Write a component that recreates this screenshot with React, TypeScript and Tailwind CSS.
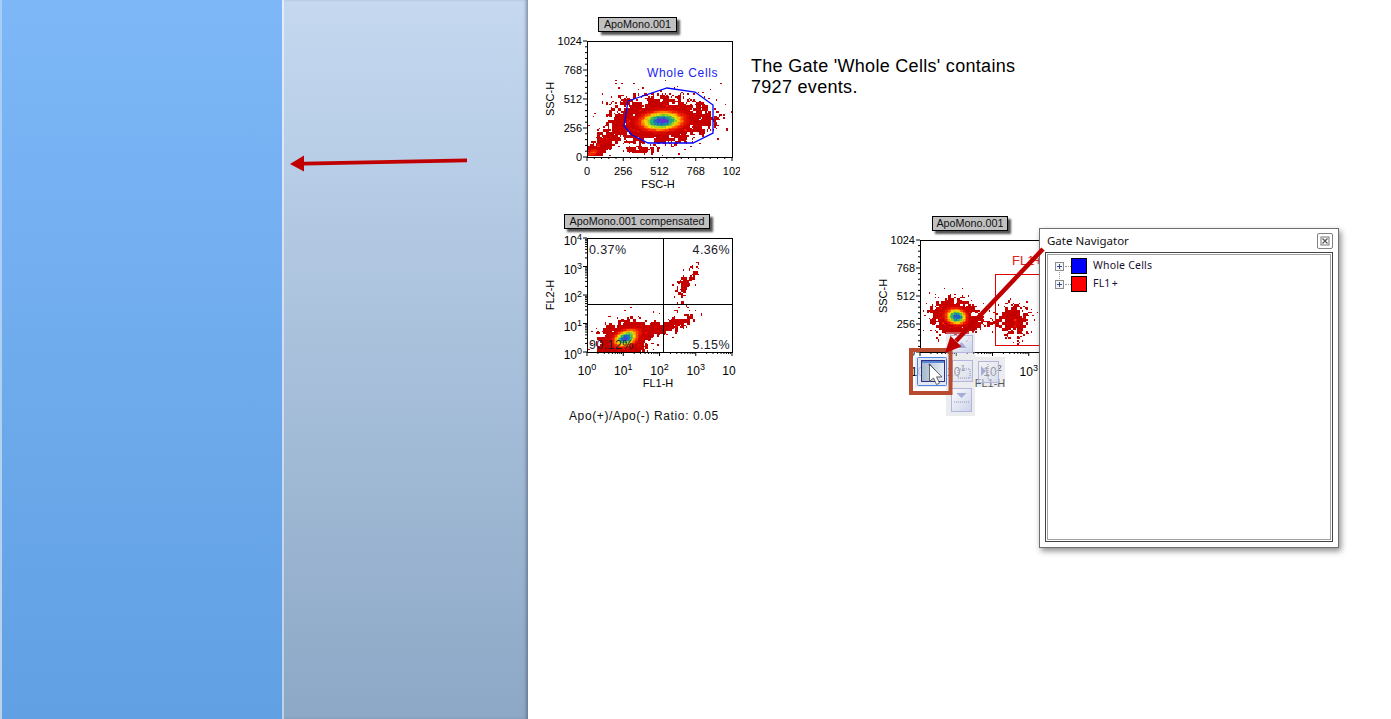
import React from 'react';

// Seeded random so the dots stay put between renders
const makeRandom = (seed: number) => () => {
  seed = (seed + 0x6d2b79f5) | 0;
  let t = Math.imul(seed ^ (seed >>> 15), 1 | seed);
  t = (t + Math.imul(t ^ (t >>> 7), 61 | t)) ^ t;
  return ((t ^ (t >>> 14)) >>> 0) / 4294967296;
};

interface Blob {
  cx: number;
  cy: number;
  sx: number;
  sy: number;
  rot?: number;
  a: number;
}

interface Box {
  x0: number;
  y0: number;
  x1: number;
  y1: number;
}

const RAMP: [number, number[]][] = [
  [0, [190, 0, 0]],
  [0.3, [205, 0, 0]],
  [0.42, [240, 30, 0]],
  [0.52, [255, 130, 0]],
  [0.62, [245, 225, 0]],
  [0.72, [120, 200, 50]],
  [0.82, [30, 165, 130]],
  [0.92, [30, 90, 210]],
  [1, [130, 30, 210]],
];

const rampColor = (v: number) => {
  const t = Math.min(1, Math.max(0, v));
  for (let i = 1; i < RAMP.length; i++) {
    if (t <= RAMP[i][0]) {
      const [p0, c0] = RAMP[i - 1];
      const [p1, c1] = RAMP[i];
      const k = (t - p0) / (p1 - p0);
      const c = c0.map((n, j) => Math.round(n + (c1[j] - n) * k));
      return `rgb(${c[0]},${c[1]},${c[2]})`;
    }
  }
  return 'rgb(130,30,210)';
};

const densityAt = (blobs: Blob[], x: number, y: number) => {
  let sum = 0;
  for (const b of blobs) {
    const r = ((b.rot ?? 0) * Math.PI) / 180;
    const dx = x - b.cx;
    const dy = y - b.cy;
    const u = (dx * Math.cos(r) + dy * Math.sin(r)) / b.sx;
    const w = (-dx * Math.sin(r) + dy * Math.cos(r)) / b.sy;
    sum += b.a * Math.exp(-0.5 * (u * u + w * w));
  }
  return sum;
};

function Density({ box, blobs, seed }: { box: Box; blobs: Blob[]; seed: number }) {
  const rnd = makeRandom(seed);
  const blotches = new Map<string, number>();
  const cells: React.ReactElement[] = [];
  const step = 1.5;
  for (let x = box.x0 + 1; x < box.x1 - 1; x += step) {
    for (let y = box.y0 + 1; y < box.y1 - 1; y += step) {
      const v = densityAt(blobs, x, y);
      // coarse noise makes the low density edge blotchy
      const key = `${Math.floor(x / 3)}:${Math.floor(y / 3)}`;
      if (!blotches.has(key)) blotches.set(key, 0.2 + 1.6 * rnd());
      const blotch = blotches.get(key) as number;
      const noisy = (v < 0.25 ? v * blotch : v) * (0.75 + 0.5 * rnd());
      if (noisy < 0.07 && rnd() > noisy / 0.5) continue;
      const shade = v < 0.25 ? noisy * 0.9 : v * (0.94 + 0.12 * rnd());
      cells.push(<rect key={`${x}-${y}`} x={x} y={y} width={step} height={step} fill={rampColor(shade)} />);
    }
  }
  return <g shapeRendering="crispEdges">{cells}</g>;
}

function LinearAxes({ box }: { box: Box }) {
  const w = box.x1 - box.x0;
  const h = box.y1 - box.y0;
  const ticks = [];
  for (let i = 0; i <= 20; i++) {
    const len = i % 5 === 0 ? 4 : 2;
    ticks.push(<line key={`x${i}`} x1={box.x0 + (w * i) / 20} x2={box.x0 + (w * i) / 20} y1={box.y1} y2={box.y1 + len} stroke="#000" />);
    ticks.push(<line key={`y${i}`} x1={box.x0 - len} x2={box.x0} y1={box.y1 - (h * i) / 20} y2={box.y1 - (h * i) / 20} stroke="#000" />);
  }
  return (
    <g>
      {ticks}
      {['0', '256', '512', '768', '1024'].map((t, i) => (
        <text key={t} x={box.x0 - 5} y={box.y1 - (h * i) / 4 + 4} textAnchor="end" fontSize="11">
          {t}
        </text>
      ))}
      {['0', '256', '512', '768', '102'].map((t, i) => (
        <text key={t} x={box.x0 + (w * i) / 4} y={box.y1 + 18} textAnchor="middle" fontSize="11">
          {t}
        </text>
      ))}
    </g>
  );
}

function LogAxes({ box, labelY }: { box: Box; labelY: number }) {
  const w = box.x1 - box.x0;
  const h = box.y1 - box.y0;
  const ticks = [];
  for (let d = 0; d < 4; d++) {
    for (let m = 1; m < 10; m++) {
      const f = (d + Math.log10(m)) / 4;
      const len = m === 1 ? 4 : 2;
      ticks.push(<line key={`x${d}${m}`} x1={box.x0 + w * f} x2={box.x0 + w * f} y1={box.y1} y2={box.y1 + len} stroke="#000" />);
      ticks.push(<line key={`y${d}${m}`} x1={box.x0 - len} x2={box.x0} y1={box.y1 - h * f} y2={box.y1 - h * f} stroke="#000" />);
    }
  }
  return (
    <g>
      {ticks}
      <line x1={box.x1} x2={box.x1} y1={box.y1} y2={box.y1 + 4} stroke="#000" />
      <line x1={box.x0 - 4} x2={box.x0} y1={box.y0} y2={box.y0} stroke="#000" />
      {[0, 1, 2, 3].map((d) => (
        <text key={d} x={box.x0 + (w * d) / 4} y={labelY} textAnchor="middle" fontSize="12">
          10<tspan dy="-5" fontSize="9">{d}</tspan>
        </text>
      ))}
      <text x={box.x1 - 3} y={labelY} textAnchor="middle" fontSize="12">10</text>
      {[0, 1, 2, 3, 4].map((d) => (
        <text key={d} x={box.x0 - 5} y={box.y1 - (h * d) / 4 + 7} textAnchor="end" fontSize="12">
          10
          <tspan dy="-5" fontSize="9">{d}</tspan>
        </text>
      ))}
    </g>
  );
}

const scatterBox: Box = { x0: 587, y0: 41, x1: 732, y1: 157 };
const compBox: Box = { x0: 587, y0: 238, x1: 732, y1: 352 };
const fl1Box: Box = { x0: 920, y0: 240, x1: 1065, y1: 352 };

const scatterBlobs: Blob[] = [
  { cx: 660, cy: 120, sx: 12, sy: 5.5, rot: -4, a: 0.46 },
  { cx: 662, cy: 120, sx: 25, sy: 11, rot: -4, a: 0.52 },
  { cx: 606, cy: 138, sx: 14, sy: 5.5, rot: -38, a: 0.2 },
  { cx: 591, cy: 152, sx: 7, sy: 3.5, rot: -15, a: 0.4 },
  { cx: 640, cy: 149, sx: 10, sy: 2.2, a: 0.18 },
  { cx: 625, cy: 98, sx: 30, sy: 10, rot: -8, a: 0.04 },
];

const compBlobs: Blob[] = [
  { cx: 625, cy: 337, sx: 6.5, sy: 4, rot: -25, a: 0.46 },
  { cx: 624, cy: 338, sx: 15, sy: 9.5, rot: -18, a: 0.52 },
  { cx: 652, cy: 327, sx: 13, sy: 3.5, rot: -8, a: 0.14 },
  { cx: 678, cy: 323, sx: 11, sy: 4, rot: -25, a: 0.2 },
  { cx: 686, cy: 278, sx: 10, sy: 3.5, rot: -55, a: 0.2 },
  { cx: 678, cy: 302, sx: 4, sy: 10, rot: 15, a: 0.07 },
];

const fl1Blobs: Blob[] = [
  { cx: 956, cy: 316, sx: 5.5, sy: 4.5, rot: 10, a: 0.46 },
  { cx: 954, cy: 315, sx: 12.5, sy: 9, rot: 8, a: 0.52 },
  { cx: 984, cy: 323, sx: 12, sy: 2.5, a: 0.14 },
  { cx: 1014, cy: 320, sx: 9, sy: 10, a: 0.22 },
];

function PlotChip({ className, children }: { className: string; children: React.ReactNode }) {
  return (
    <div className={`absolute flex h-[15px] items-center justify-center border border-black bg-[#c0c0c0] text-[10.8px] text-[#111] shadow-[3px_3px_2px_#555] ${className}`}>
      {children}
    </div>
  );
}

function TreeToggle() {
  return (
    <svg width="9" height="9" viewBox="0 0 9 9" className="shrink-0">
      <rect x="0.5" y="0.5" width="8" height="8" fill="#f4f4f4" stroke="#8c8c8c" />
      <path d="M2 4.5h5M4.5 2v5" stroke="#2f4d9c" />
    </svg>
  );
}

function GateRow({ color, label, hasNext }: { color: string; label: string; hasNext?: boolean }) {
  return (
    <div className="relative flex h-[18px] items-center">
      <TreeToggle />
      {hasNext && <span className="absolute left-[4px] top-[13px] h-[9px] border-l border-dotted border-[#999]" />}
      <span className="ml-px w-[6px] border-t border-dotted border-[#999]" />
      <span className={`h-[16px] w-[16px] border border-black ${color}`} />
      <span className="ml-[6px] text-[10.5px] tracking-[0.2px] text-[#1a1030]">{label}</span>
    </div>
  );
}

function GateNavigator() {
  return (
    <div className="absolute left-[1039px] top-[228px] flex h-[320px] w-[300px] flex-col border border-[#707070] bg-white px-[5px] pb-[5px] shadow-[2px_3px_6px_rgba(0,0,0,0.45)] font-['Noto_Sans',sans-serif]">
      <div className="flex h-[23px] shrink-0 items-center justify-between pl-[2px]">
        <span className="text-[11.5px] text-[#111]">Gate Navigator</span>
        <span className="flex h-[16px] w-[16px] items-center justify-center rounded-[2px] border border-[#808080]">
          <svg width="10" height="10" viewBox="0 0 10 10">
            <rect x="1" y="1" width="8" height="8" fill="none" stroke="#777" />
            <path d="M2.5 2.5l5 5M7.5 2.5l-5 5" stroke="#555" strokeWidth="1.2" />
          </svg>
        </span>
      </div>
      <div className="flex-1 border border-[#444] p-px">
        <div className="h-full border border-[#a0a0a0] pl-[7px] pt-[2px]">
          <GateRow color="bg-[#0000ff]" label="Whole Cells" hasNext />
          <GateRow color="bg-[#ff0000]" label={'FL1\u200a+'} />
        </div>
      </div>
    </div>
  );
}

// Floating gate tool cross and cursor, drawn over plot 3
function GateWidget() {
  return (
    <svg viewBox="905 325 110 95" className="absolute left-[905px] top-[325px] h-[95px] w-[110px]">
      <defs>
        <linearGradient id="toolFill" x1="0" y1="0" x2="1" y2="1">
          <stop offset="0" stopColor="#ffffff" stopOpacity="0.35" />
          <stop offset="1" stopColor="#c4cee8" stopOpacity="0.55" />
        </linearGradient>
        <linearGradient id="toolSolid" x1="0" y1="0" x2="1" y2="1">
          <stop offset="0" stopColor="#ffffff" stopOpacity="0.8" />
          <stop offset="1" stopColor="#c4cee8" stopOpacity="0.85" />
        </linearGradient>
        <linearGradient id="toolOn" x1="0" y1="0" x2="1" y2="0">
          <stop offset="0" stopColor="#a4b8cc" />
          <stop offset="1" stopColor="#e8eef8" />
        </linearGradient>
      </defs>
      <path d="M946 332h29v25h30v30h-30v29h-29v-29h-31v-30h31z" fill="#cfd2d6" fillOpacity="0.42" />
      <rect x="950.5" y="335.5" width="22" height="17" fill="url(#toolSolid)" stroke="#b4b4dc" />
      <path d="M961.5 342l-5 6h10z" fill="#a4acd8" />
      <rect x="952.5" y="360.5" width="20" height="21" fill="url(#toolFill)" stroke="#b4b4dc" />
      <rect x="958" y="369" width="12" height="9" fill="none" stroke="#9090b8" strokeDasharray="1 1" />
      <rect x="978.5" y="361.5" width="20" height="21" fill="url(#toolFill)" stroke="#b4b4dc" />
      <path d="M981 366l5 5-5 5z" fill="#a4acd8" />
      <path d="M988 364v16" stroke="#9090b8" strokeDasharray="1 1" />
      <rect x="951.5" y="388.5" width="20" height="23" fill="url(#toolSolid)" stroke="#b4b4dc" />
      <path d="M961.5 398l-5-5h10z" fill="#a4acd8" />
      <path d="M954 402h15" stroke="#9090b8" strokeDasharray="1 1" />
      <rect x="917.5" y="357.5" width="29" height="28" rx="1" fill="#dfe8f6" fillOpacity="0.7" stroke="#4a84e0" />
      <rect x="921.5" y="360.5" width="23" height="21" fill="url(#toolOn)" stroke="#2f2f80" />
      <rect x="922" y="361" width="22" height="2" fill="#5a86d8" />
      <path d="M929 364l11 13" stroke="#2f2f80" strokeWidth="1.6" />
      <path d="M929.5 364.5v17l4-3.5 3 6.5 3-1.3-3-6.3h5.5z" fill="#fff" stroke="#444" strokeWidth="0.8" />
    </svg>
  );
}

function Annotations() {
  return (
    <svg viewBox="0 0 1391 719" className="pointer-events-none absolute left-0 top-0 h-[719px] w-[1391px]">
      <path d="M467 158.5l-163 3.2v-6.2l-14 8.5 14 7.5v-6l163-3.2z" fill="#c00000" />
      <rect x="911" y="350" width="39.5" height="43" fill="none" stroke="#b84a30" strokeWidth="4" />
      <path d="M1043 249l-87 92" stroke="#c00000" strokeWidth="4.5" />
      <path d="M945 353l5.5-17 11 10.5z" fill="#c00000" />
    </svg>
  );
}

// Linear y axis with log x axis for the FL1 plot
function MixedAxes({ box }: { box: Box }) {
  const w = box.x1 - box.x0;
  const h = box.y1 - box.y0;
  const ticks = [];
  for (let d = 0; d < 4; d++) {
    for (let m = 1; m < 10; m++) {
      const x = box.x0 + (w * (d + Math.log10(m))) / 4;
      ticks.push(<line key={`${d}${m}`} x1={x} x2={x} y1={box.y1} y2={box.y1 + (m === 1 ? 4 : 2)} stroke="#000" />);
    }
  }
  for (let i = 0; i <= 20; i++) {
    const len = i % 5 === 0 ? 4 : 2;
    ticks.push(<line key={`y${i}`} x1={box.x0 - len} x2={box.x0} y1={box.y1 - (h * i) / 20} y2={box.y1 - (h * i) / 20} stroke="#000" />);
  }
  return (
    <g>
      {ticks}
      {['0', '256', '512', '768', '1024'].map((t, i) => (
        <text key={t} x={box.x0 - 5} y={box.y1 - (h * i) / 4 + 4} textAnchor="end" fontSize="11">
          {t}
        </text>
      ))}
      {[0, 1, 2, 3].map((d) => (
        <text key={d} x={box.x0 + (w * d) / 4} y={376} textAnchor="middle" fontSize="12">
          10<tspan dy="-5" fontSize="9">{d}</tspan>
        </text>
      ))}
    </g>
  );
}

export default function App() {
  return (
    <div className="relative flex h-[719px] w-[1391px] overflow-hidden bg-white font-['Liberation_Sans',Arial,sans-serif] text-black">
      <aside className="flex h-full w-[528px] shrink-0">
        <div className="w-[2px] bg-linear-to-b from-[#a6cdf8] to-[#bcd2ea]" />
        <div className="w-[280px] bg-linear-to-b from-[#7db7f8] to-[#60a0e3]" />
        <div className="w-[2px] bg-linear-to-b from-[#e4edf8] to-[#bcd0e8]" />
        <div className="flex-1 bg-linear-to-b from-[#c5d8f0] to-[#8ca8c6] shadow-[inset_-3px_0_3px_-1px_rgba(70,80,100,0.5)]" />
      </aside>

      {/* Plot 1: scatter with Whole Cells gate */}
      <PlotChip className="left-[598px] top-[17px] w-[79px]">ApoMono.001</PlotChip>
      <svg viewBox="540 30 200 165" className="absolute left-[540px] top-[30px] h-[165px] w-[200px]">
        <Density box={scatterBox} blobs={scatterBlobs} seed={11} />
        <rect x="587.5" y="41.5" width="145" height="116" fill="none" stroke="#000" />
        <LinearAxes box={scatterBox} />
        <polygon points="628,101 667,88 695,92 713,105 713,133 693,143 648,143 632,135 624,126" fill="none" stroke="#0000ff" strokeWidth="1.3" />
        <text x="647" y="76.5" fontSize="12" letterSpacing="0.65" fill="#2222ee">Whole Cells</text>
        <text x="658" y="188" textAnchor="middle" fontSize="11">FSC-H</text>
        <text transform="translate(554 99) rotate(-90)" textAnchor="middle" fontSize="11">SSC-H</text>
      </svg>

      <div className="absolute left-[751px] top-[56px] w-[290px] text-[18px] leading-[21px] tracking-[0.3px]">
        The Gate 'Whole Cells' contains 7927 events.
      </div>

      {/* Plot 2: compensated quadrants */}
      <PlotChip className="left-[564px] top-[214px] w-[146px]">ApoMono.001 compensated</PlotChip>
      <svg viewBox="540 230 200 165" className="absolute left-[540px] top-[230px] h-[165px] w-[200px]">
        <Density box={compBox} blobs={compBlobs} seed={23} />
        <rect x="587.5" y="238.5" width="145" height="114" fill="none" stroke="#000" />
        <path d="M663.5 238v114M587 304.5h145" stroke="#000" />
        <LogAxes box={compBox} labelY={375} />
        <g fontSize="12.5" letterSpacing="0.4" fill="#1a1a2a">
          <text x="589" y="254">0.37%</text>
          <text x="730" y="254" textAnchor="end">4.36%</text>
          <text x="589" y="349">90.12%</text>
          <text x="730" y="349" textAnchor="end">5.15%</text>
        </g>
        <text x="658" y="387" textAnchor="middle" fontSize="11">FL1-H</text>
        <text transform="translate(554 295) rotate(-90)" textAnchor="middle" fontSize="11">FL2-H</text>
      </svg>

      <div className="absolute left-[569px] top-[409px] text-[12px] leading-[15px] tracking-[0.62px] text-[#111]">
        Apo(+)/Apo(-) Ratio: 0.05
      </div>

      {/* Plot 3: FL1 gate, right side runs under the navigator */}
      <PlotChip className="left-[932px] top-[216px] w-[76px]">ApoMono.001</PlotChip>
      <svg viewBox="875 232 200 165" className="absolute left-[875px] top-[232px] h-[165px] w-[200px]">
        <Density box={fl1Box} blobs={fl1Blobs} seed={37} />
        <rect x="920.5" y="240.5" width="145" height="112" fill="none" stroke="#000" />
        <MixedAxes box={fl1Box} />
        <rect x="995.5" y="274.5" width="70" height="71" fill="none" stroke="#e00000" />
        <text x="1012" y="265" fontSize="13" fill="#e02020">FL1+</text>
        <text x="990" y="387" textAnchor="middle" fontSize="11">FL1-H</text>
        <text transform="translate(887 296) rotate(-90)" textAnchor="middle" fontSize="11">SSC-H</text>
      </svg>

      <GateWidget />
      <GateNavigator />
      <Annotations />
    </div>
  );
}
